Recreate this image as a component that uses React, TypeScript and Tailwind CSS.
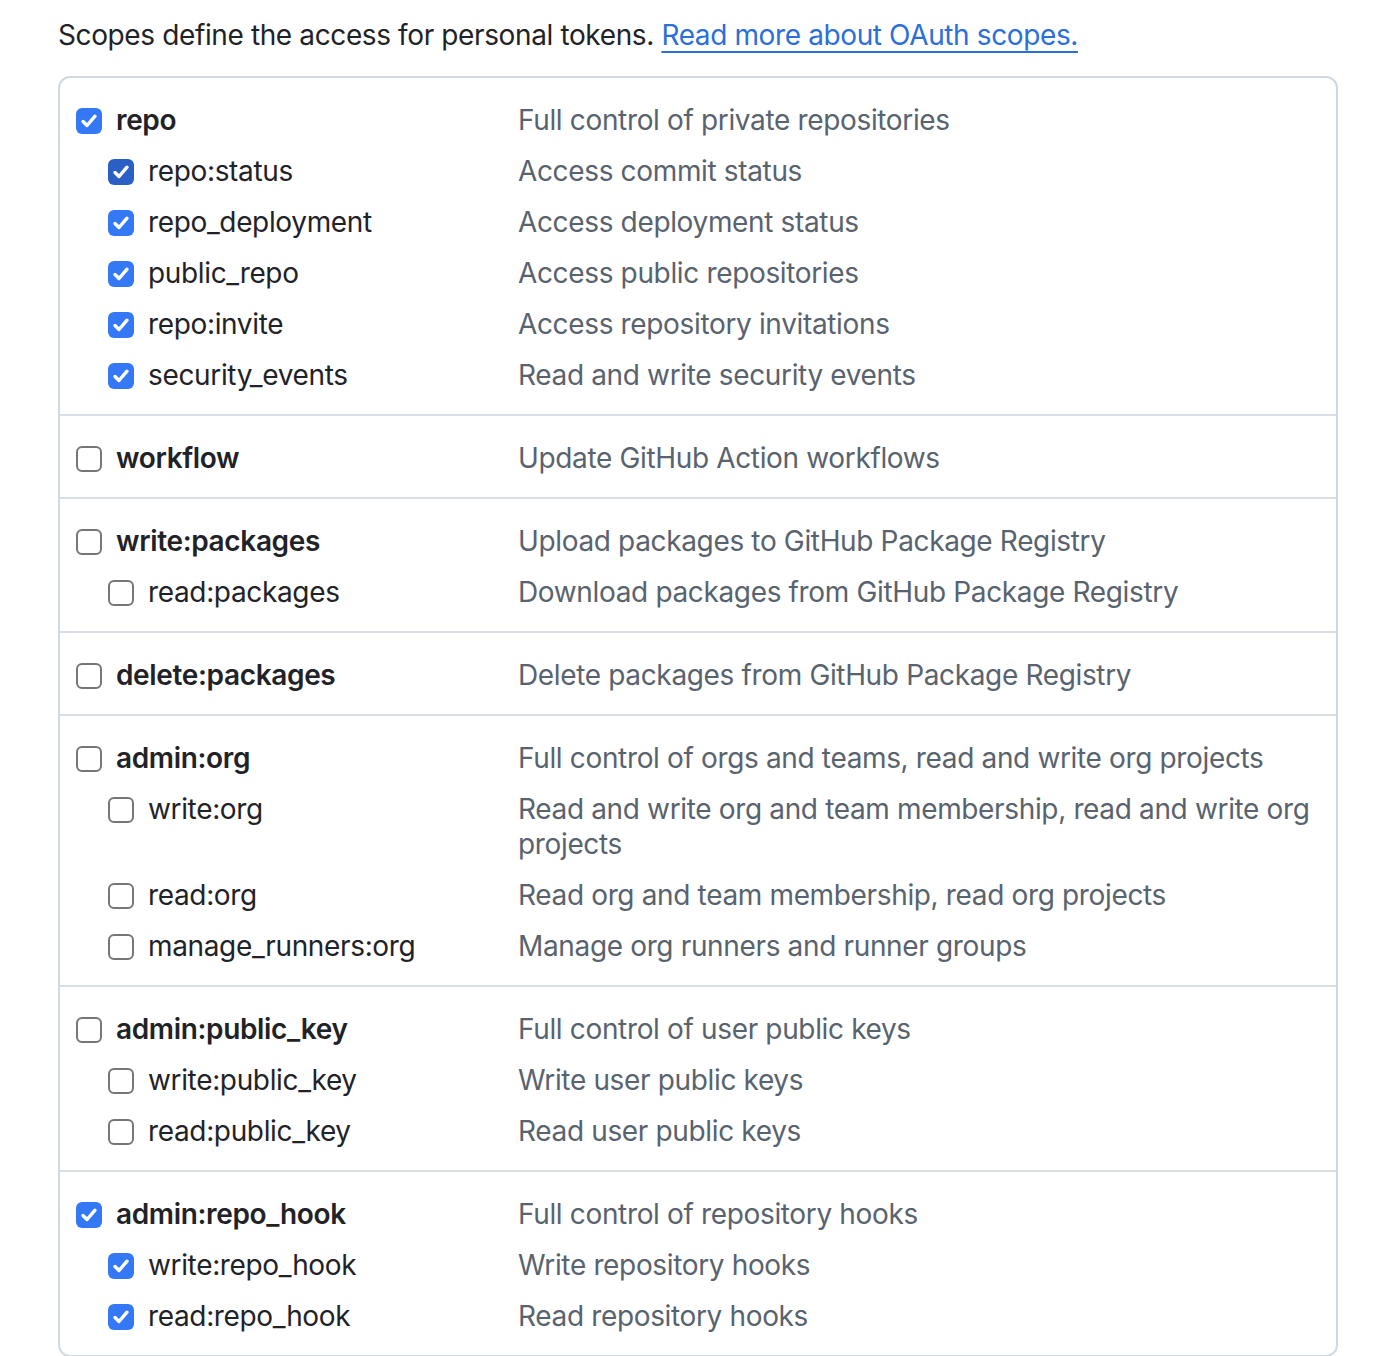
import React from "react";

type Scope = { name: string; desc: string; checked: boolean; dark?: boolean };
type Group = { top: Scope; subs: Scope[] };

const groups: Group[] = [
  {
    top: { name: "repo", desc: "Full control of private repositories", checked: true },
    subs: [
      { name: "repo:status", desc: "Access commit status", checked: true, dark: true },
      { name: "repo_deployment", desc: "Access deployment status", checked: true },
      { name: "public_repo", desc: "Access public repositories", checked: true },
      { name: "repo:invite", desc: "Access repository invitations", checked: true },
      { name: "security_events", desc: "Read and write security events", checked: true },
    ],
  },
  { top: { name: "workflow", desc: "Update GitHub Action workflows", checked: false }, subs: [] },
  {
    top: { name: "write:packages", desc: "Upload packages to GitHub Package Registry", checked: false },
    subs: [{ name: "read:packages", desc: "Download packages from GitHub Package Registry", checked: false }],
  },
  { top: { name: "delete:packages", desc: "Delete packages from GitHub Package Registry", checked: false }, subs: [] },
  {
    top: { name: "admin:org", desc: "Full control of orgs and teams, read and write org projects", checked: false },
    subs: [
      { name: "write:org", desc: "Read and write org and team membership, read and write org projects", checked: false },
      { name: "read:org", desc: "Read org and team membership, read org projects", checked: false },
      { name: "manage_runners:org", desc: "Manage org runners and runner groups", checked: false },
    ],
  },
  {
    top: { name: "admin:public_key", desc: "Full control of user public keys", checked: false },
    subs: [
      { name: "write:public_key", desc: "Write user public keys", checked: false },
      { name: "read:public_key", desc: "Read user public keys", checked: false },
    ],
  },
  {
    top: { name: "admin:repo_hook", desc: "Full control of repository hooks", checked: true },
    subs: [
      { name: "write:repo_hook", desc: "Write repository hooks", checked: true },
      { name: "read:repo_hook", desc: "Read repository hooks", checked: true },
    ],
  },
];

function Box({ checked, dark }: { checked: boolean; dark?: boolean }) {
  if (checked) {
    return (
      <span
        className={`mt-[5px] flex h-[26px] w-[26px] shrink-0 items-center justify-center rounded-[6px] ${
          dark ? "bg-[#2c5fc6]" : "bg-[#3478f6]"
        }`}
      >
        <svg width="20" height="20" viewBox="0 0 20 20" fill="none">
          <path d="M4 10.5 L8 14.5 L16 5.2" stroke="white" strokeWidth="3.4" strokeLinecap="round" strokeLinejoin="round" />
        </svg>
      </span>
    );
  }
  return <span className="mt-[5px] block h-[26px] w-[26px] shrink-0 rounded-[6px] border-[2px] border-[#767676] bg-white" />;
}

function Row({ s, top }: { s: Scope; top: boolean }) {
  return (
    <div className="flex items-start">
      <div className={`flex w-[442px] shrink-0 items-start ${top ? "" : "pl-[32px]"}`}>
        <Box checked={s.checked} dark={s.dark} />
        <span
          className={`ml-[14px] text-[28px] leading-[35px] tracking-[-0.35px] text-[#1f2328] ${top ? "font-semibold" : "font-normal"}`}
        >
          {s.name}
        </span>
      </div>
      <div className="flex-1 pr-[14px] text-[28px] leading-[35px] tracking-[-0.35px] text-[#59636e]">{s.desc}</div>
    </div>
  );
}

export default function App() {
  return (
    <div className="min-h-[1356px] bg-white px-[58px] pt-[14px]" style={{ fontFamily: "Inter, 'Noto Sans', sans-serif" }}>
      <p className="text-[28px] leading-[42px] tracking-[-0.38px] text-[#1f2328]">
        Scopes define the access for personal tokens.{" "}
        <a href="#" className="text-[#2b6fd9] underline decoration-[2px] underline-offset-[6px]">
          Read more about OAuth scopes.
        </a>
      </p>
      <div className="mt-[20px] w-[1280px] rounded-[12px] border-[2px] border-[#d1d9e0]">
        {groups.map((g, i) => (
          <div
            key={g.top.name}
            className={`flex flex-col gap-[16px] pl-[16px] pt-[25px] pb-[21px] ${i > 0 ? "border-t-[2px] border-[#d8dee4]" : ""}`}
          >
            <Row s={g.top} top />
            {g.subs.map((s) => (
              <Row key={s.name} s={s} top={false} />
            ))}
          </div>
        ))}
      </div>
    </div>
  );
}
